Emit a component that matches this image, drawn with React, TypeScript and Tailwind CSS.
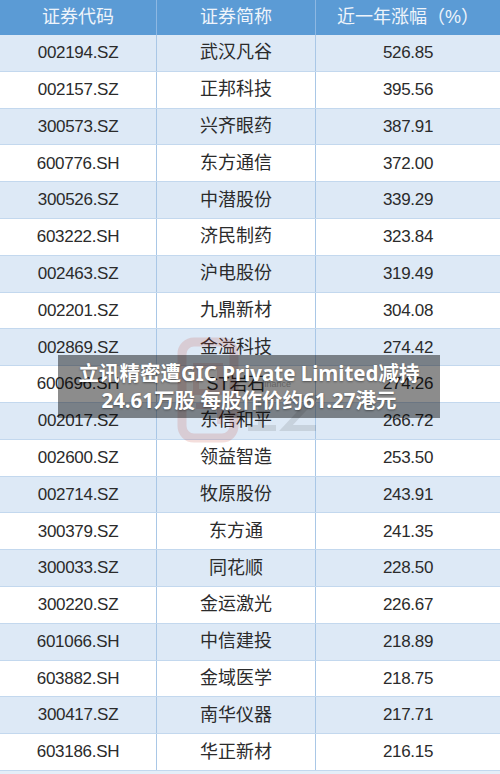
import React from "react";

const rows: [string, string, string][] = [
  ["002194.SZ", "武汉凡谷", "526.85"],
  ["002157.SZ", "正邦科技", "395.56"],
  ["300573.SZ", "兴齐眼药", "387.91"],
  ["600776.SH", "东方通信", "372.00"],
  ["300526.SZ", "中潜股份", "339.29"],
  ["603222.SH", "济民制药", "323.84"],
  ["002463.SZ", "沪电股份", "319.49"],
  ["002201.SZ", "九鼎新材", "304.08"],
  ["002869.SZ", "金溢科技", "274.42"],
  ["600696.SH", "ST岩石", "274.26"],
  ["002017.SZ", "东信和平", "266.72"],
  ["002600.SZ", "领益智造", "253.50"],
  ["002714.SZ", "牧原股份", "243.91"],
  ["300379.SZ", "东方通", "241.35"],
  ["300033.SZ", "同花顺", "228.50"],
  ["300220.SZ", "金运激光", "226.67"],
  ["601066.SH", "中信建投", "218.89"],
  ["603882.SH", "金域医学", "218.75"],
  ["300417.SZ", "南华仪器", "217.71"],
  ["603186.SH", "华正新材", "216.15"],
];

const font = "font-['Liberation_Sans','Noto_Sans_CJK_SC',sans-serif]";

function Watermark() {
  return (
    <svg
      className="absolute left-[176px] top-[336px] pointer-events-none"
      width="150"
      height="110"
      viewBox="0 0 150 110"
    >
      <g opacity="0.16">
        <rect x="6" y="6" width="52" height="96" rx="12" fill="none" stroke="#c0392b" strokeWidth="9" />
        <rect x="20" y="30" width="24" height="26" fill="none" stroke="#c0392b" strokeWidth="6" />
        <path d="M20 70 H44 V88" fill="none" stroke="#c0392b" strokeWidth="6" />
      </g>
      <g opacity="0.12" fill="none" stroke="#333" strokeWidth="6">
        <path d="M70 62 h30 M85 62 v30 M72 92 h28" />
        <path d="M108 62 h30 l-28 30 h30" />
      </g>
      <text x="86" y="51" fontSize="9" fill="#999" opacity="0.7" fontFamily="Liberation Sans, sans-serif">
        finance
      </text>
    </svg>
  );
}

export default function App() {
  return (
    <div className={`relative w-[500px] h-[774px] bg-[#e4eef8] overflow-hidden ${font}`}>
      <div className="flex h-[35px] bg-[#5b9bd5] text-[#eef4fb] text-[18px]">
        <div className="w-[157px] flex items-center justify-center border-r border-[#8db8e3]">证券代码</div>
        <div className="w-[159px] flex items-center justify-center border-r border-[#8db8e3]">证券简称</div>
        <div className="flex-1 flex items-center justify-center">近一年涨幅（%）</div>
      </div>
      {rows.map(([code, name, pct], i) => (
        <div
          key={code}
          className={`flex h-[36.8px] border-b border-[#c3d8ee] text-[#2b2b2b] ${
            i % 2 === 0 ? "bg-[#dde9f6]" : "bg-white"
          }`}
        >
          <div className="w-[157px] flex items-center justify-center border-r border-[#a9c7e6] text-[17px] tracking-[-0.3px]">
            {code}
          </div>
          <div className="w-[159px] flex items-center justify-center border-r border-[#a9c7e6] text-[18px]">
            {name}
          </div>
          <div className="flex-1 flex items-center justify-center text-[17px] tracking-[-0.3px]">{pct}</div>
        </div>
      ))}

      <Watermark />

      <div className="absolute left-[58px] top-[355px] w-[382px] h-[63px] bg-black/45 flex flex-col items-center justify-center font-['Noto_Sans','Noto_Sans_CJK_SC',sans-serif] font-bold text-white text-[20.5px] leading-[27px] [text-shadow:0_1px_2px_rgba(0,0,0,0.4)]">
        <div>立讯精密遭GIC Private Limited减持</div>
        <div>24.61万股 每股作价约61.27港元</div>
      </div>
    </div>
  );
}
